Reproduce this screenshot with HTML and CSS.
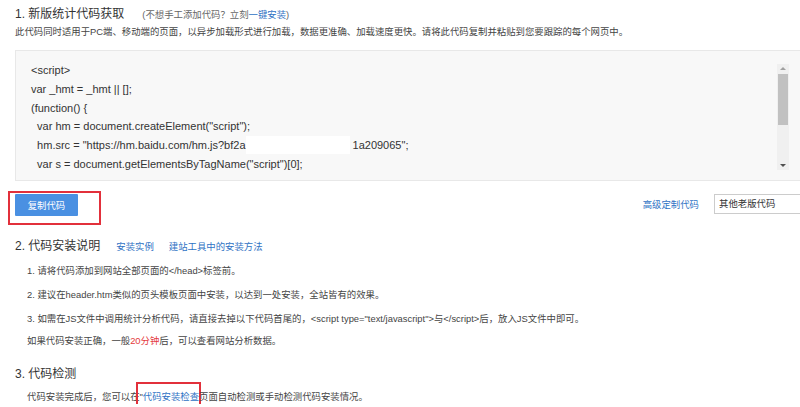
FILE: index.html
```html
<!DOCTYPE html>
<html lang="zh-CN">
<head>
	<meta charset="utf-8" />
	<title>统计代码获取</title>
	<link rel="stylesheet" href="styles.css">
</head>
<body>
	<div class="page">
		<h2 class="title">1. 新版统计代码获取<span class="hint">(不想手工添加代码？立刻<a href="#">一键安装</a>)</span></h2>
		<p class="desc">此代码同时适用于PC端、移动端的页面，以异步加载形式进行加载，数据更准确、加载速度更快。请将此代码复制并粘贴到您要跟踪的每个网页中。</p>

		<div class="codebox">
			<pre class="code">&lt;script&gt;
var _hmt = _hmt || [];
(function() {
  var hm = document.createElement("script");
  hm.src = "https://hm.baidu.com/hm.js?bf2a<span class="mask"></span>1a209065";
  var s = document.getElementsByTagName("script")[0];</pre>
			<div class="scrollbar">
				<span class="arrow up"></span>
				<span class="thumb"></span>
				<span class="arrow down"></span>
			</div>
		</div>

		<div class="actions">
			<div class="marked">
				<button class="copy">复制代码</button>
			</div>
			<div class="tools">
				<a href="#" class="link">高级定制代码</a>
				<div class="select">其他老版代码</div>
			</div>
		</div>

		<h2 class="title section">2. 代码安装说明<a href="#" class="sublink">安装实例</a><a href="#" class="sublink">建站工具中的安装方法</a></h2>
		<ol class="steps">
			<li>1. 请将代码添加到网站全部页面的&lt;/head&gt;标签前。</li>
			<li>2. 建议在header.htm类似的页头模板页面中安装，以达到一处安装，全站皆有的效果。</li>
			<li>3. 如需在JS文件中调用统计分析代码，请直接去掉以下代码首尾的，&lt;script type="text/javascript"&gt;与&lt;/script&gt;后，放入JS文件中即可。</li>
		</ol>
		<p class="note">如果代码安装正确，一般<em>20分钟</em>后，可以查看网站分析数据。</p>

		<h2 class="title check">3. 代码检测</h2>
		<p class="note last">代码安装完成后，您可以在<span class="marked-inline">"<a href="#">代码安装检查</a></span>页面自动检测或手动检测代码安装情况。</p>
	</div>
</body>
</html>
```

FILE: styles.css
```css
html {
	background-color: #fff;
	font-family: "Liberation Sans", Arial, "Noto Sans CJK SC", sans-serif;
	color: #444;
}

body {
	margin: 0;
	padding: 0;
	overflow: hidden;
}

a {
	color: #2f72c4;
	text-decoration: none;
}

.page {
	padding: 0 0 0 15px;
}

.title {
	margin: 4px 0 0 0;
	font-size: 12px;
	font-weight: normal;
	line-height: 20px;
	color: #333;
}

.hint {
	margin-left: 18px;
	font-size: 9.4px;
	color: #666;
}

.desc {
	margin: 0;
	font-size: 9.4px;
	line-height: 14px;
}

/* code area with fake scrollbar */
.codebox {
	display: flex;
	margin-top: 11px;
	margin-right: -4px;
	height: 129px;
	border: 1px solid #e8e8e8;
	background-color: #f8f8f8;
	overflow: hidden;
}

.code {
	flex: 1;
	margin: 0;
	padding: 10px 0 0 15px;
	font-family: "Liberation Sans", Arial, sans-serif;
	font-size: 11px;
	line-height: 18.8px;
	color: #333;
	white-space: pre;
}

.mask {
	display: inline-block;
	width: 104px;
	height: 18px;
	margin-right: 3px;
	vertical-align: -5px;
	background-color: #fff;
}

.scrollbar {
	display: flex;
	flex-direction: column;
	align-items: center;
	width: 12px;
	margin: 13px 14px 10px 0;
	background-color: #f0f0f0;
}

.arrow {
	width: 0;
	height: 0;
	margin: 3px 0;
	border-left: 3px solid transparent;
	border-right: 3px solid transparent;
}

.arrow.up {
	border-bottom: 3px solid #a0a0a0;
}

.arrow.down {
	margin-top: auto;
	border-top: 3px solid #505050;
}

.thumb {
	width: 10px;
	height: 51px;
	margin-top: 1px;
	background-color: #c1c1c1;
}

/* button row */
.actions {
	display: flex;
	justify-content: space-between;
	align-items: flex-start;
	margin-top: 10px;
}

.marked {
	margin-left: -7px;
	padding: 1px 21px 7px 5px;
	border: 2px solid #e2303b;
}

.copy {
	display: block;
	width: 63px;
	height: 22px;
	padding: 0;
	border: 0;
	border-radius: 1px;
	background-color: #4a90e2;
	color: #fff;
	font-family: "Noto Sans CJK SC", sans-serif;
	font-size: 9.4px;
	cursor: pointer;
}

.tools {
	display: flex;
	align-items: center;
	margin-top: 3px;
	margin-right: -20px;
}

.link {
	font-size: 9.4px;
	margin-right: 15px;
}

.select {
	width: 100px;
	height: 18px;
	padding-left: 4px;
	border: 1px solid #ccc;
	font-size: 9.4px;
	line-height: 18px;
	color: #333;
}

/* install notes */
.section {
	margin-top: 11px;
}

.sublink {
	margin-left: 16px;
	font-size: 9.4px;
}

.sublink + .sublink {
	margin-left: 15px;
}

.steps {
	margin: 7px 0 0 0;
	padding: 0 0 0 12px;
	list-style: none;
}

.steps li {
	margin-bottom: 10px;
	font-size: 9.4px;
	line-height: 14px;
}

.note {
	margin: -2px 0 0 12px;
	font-size: 9.4px;
	line-height: 14px;
}

.note em {
	font-style: normal;
	color: #e4393c;
}

.check {
	margin-top: 16px;
}

.note.last {
	margin-top: 6px;
}

.marked-inline {
	display: inline-block;
	margin: -8px -2px -12px -4px;
	padding: 6px 0 10px 2px;
	border: 2px solid #e2303b;
	line-height: 14px;
}
```
